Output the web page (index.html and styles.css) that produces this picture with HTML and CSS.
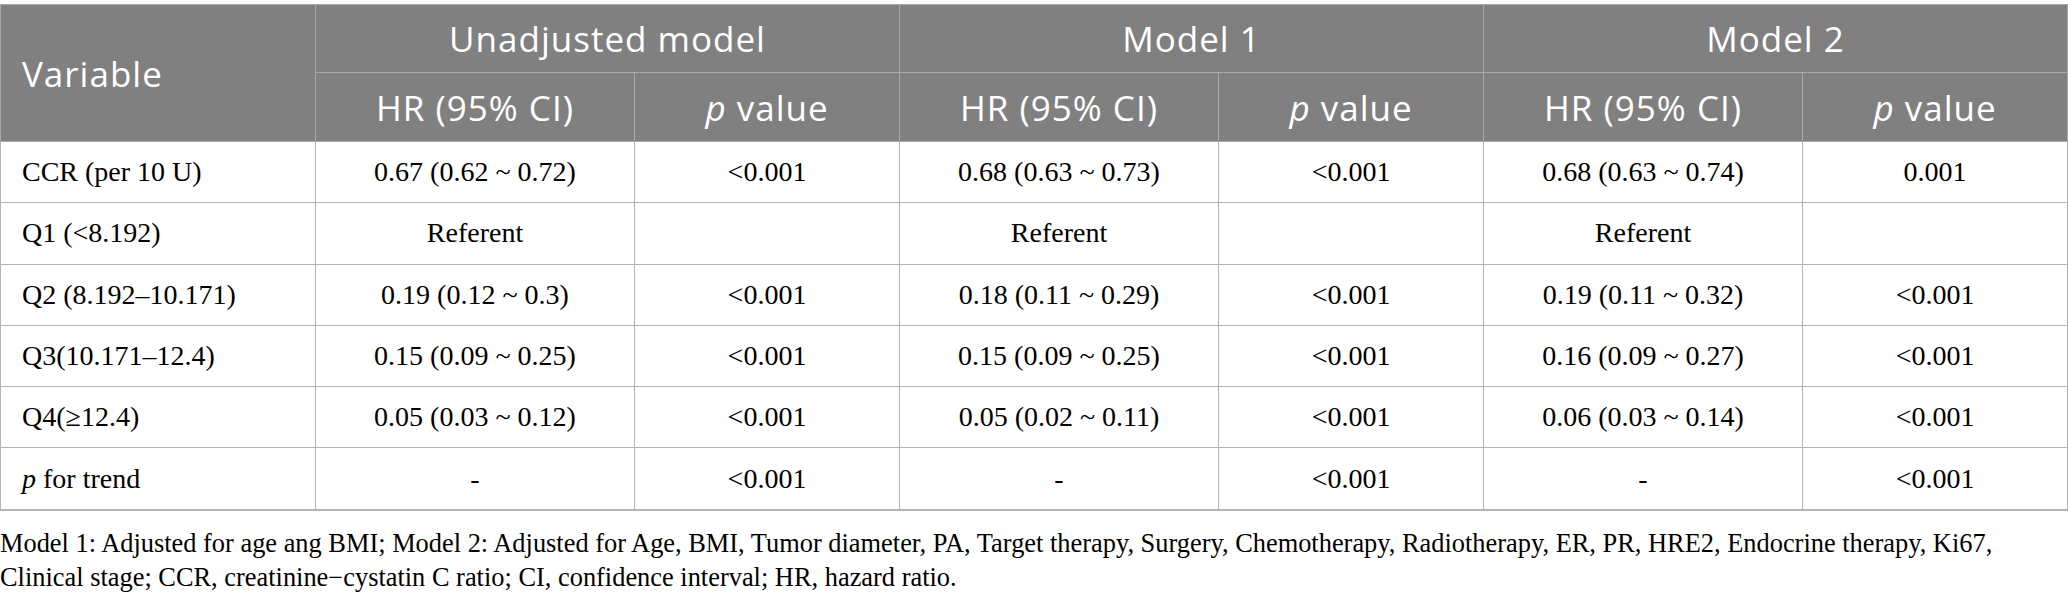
FILE: index.html
```html
<!DOCTYPE html>
<html lang="en">
<head>
<meta charset="utf-8">
<title>Table</title>
<link rel="stylesheet" href="styles.css">
</head>
<body>
<div class="page">
  <table class="tbl">
    <colgroup>
      <col class="c-var"><col class="c-hr"><col class="c-p">
      <col class="c-hr"><col class="c-p">
      <col class="c-hr"><col class="c-p2">
    </colgroup>
    <thead>
      <tr class="h1">
        <th rowspan="2" class="var">Variable</th>
        <th colspan="2">Unadjusted model</th>
        <th colspan="2">Model 1</th>
        <th colspan="2">Model 2</th>
      </tr>
      <tr class="h2">
        <th>HR (95% CI)</th><th><i>p</i> value</th>
        <th>HR (95% CI)</th><th><i>p</i> value</th>
        <th>HR (95% CI)</th><th><i>p</i> value</th>
      </tr>
    </thead>
    <tbody>
      <tr><td class="lbl">CCR (per 10 U)</td><td>0.67 (0.62 ~ 0.72)</td><td>&lt;0.001</td><td>0.68 (0.63 ~ 0.73)</td><td>&lt;0.001</td><td>0.68 (0.63 ~ 0.74)</td><td>0.001</td></tr>
      <tr><td class="lbl">Q1 (&lt;8.192)</td><td>Referent</td><td></td><td>Referent</td><td></td><td>Referent</td><td></td></tr>
      <tr><td class="lbl">Q2 (8.192–10.171)</td><td>0.19 (0.12 ~ 0.3)</td><td>&lt;0.001</td><td>0.18 (0.11 ~ 0.29)</td><td>&lt;0.001</td><td>0.19 (0.11 ~ 0.32)</td><td>&lt;0.001</td></tr>
      <tr><td class="lbl">Q3(10.171–12.4)</td><td>0.15 (0.09 ~ 0.25)</td><td>&lt;0.001</td><td>0.15 (0.09 ~ 0.25)</td><td>&lt;0.001</td><td>0.16 (0.09 ~ 0.27)</td><td>&lt;0.001</td></tr>
      <tr><td class="lbl">Q4(≥12.4)</td><td>0.05 (0.03 ~ 0.12)</td><td>&lt;0.001</td><td>0.05 (0.02 ~ 0.11)</td><td>&lt;0.001</td><td>0.06 (0.03 ~ 0.14)</td><td>&lt;0.001</td></tr>
      <tr class="last"><td class="lbl"><i>p</i> for trend</td><td>-</td><td>&lt;0.001</td><td>-</td><td>&lt;0.001</td><td>-</td><td>&lt;0.001</td></tr>
    </tbody>
  </table>
  <p class="note">Model 1: Adjusted for age ang BMI; Model 2: Adjusted for Age, BMI, Tumor diameter, PA, Target therapy, Surgery, Chemotherapy, Radiotherapy, ER, PR, HRE2, Endocrine therapy, Ki67,<br>Clinical stage; CCR, creatinine−cystatin C ratio; CI, confidence interval; HR, hazard ratio.</p>
</div>
</body>
</html>
```
FILE: styles.css
```css
html, body {
  margin: 0;
  padding: 0;
  background: #ffffff;
}

.page {
  padding-top: 4px;
}

.tbl {
  border-collapse: collapse;
  table-layout: fixed;
  width: 2067px;
}

.c-var { width: 315px; }
.c-hr { width: 319px; }
.c-p { width: 265px; }
.c-p2 { width: 265px; }

.tbl th {
  background: #808080;
  color: #ffffff;
  font-family: "Open Sans", "Noto Sans", sans-serif;
  font-weight: 400;
  font-size: 35px;
  letter-spacing: 1px;
  text-align: center;
  vertical-align: middle;
  border: 1px solid #a9a9a9;
  padding: 0;
}

.tbl th i {
  font-style: italic;
}

.h1 th {
  height: 67px;
}

.h2 th {
  height: 68px;
}

.tbl th.var {
  text-align: left;
  padding-left: 21px;
}

.tbl td {
  font-family: "Liberation Serif", "Times New Roman", serif;
  font-size: 28px;
  color: #000000;
  text-align: center;
  vertical-align: middle;
  border: 1px solid #b4b4b4;
  height: 60.3px;
  padding: 0;
}

.tbl td.lbl {
  text-align: left;
  padding-left: 21px;
}

.tbl tr.last td {
  border-bottom: 2px solid #b4b4b4;
}

.note {
  margin: 15px 0 0 0;
  padding-left: 0;
  font-family: "Liberation Serif", "Times New Roman", serif;
  font-size: 26.4px;
  line-height: 34px;
  color: #000000;
}
```
